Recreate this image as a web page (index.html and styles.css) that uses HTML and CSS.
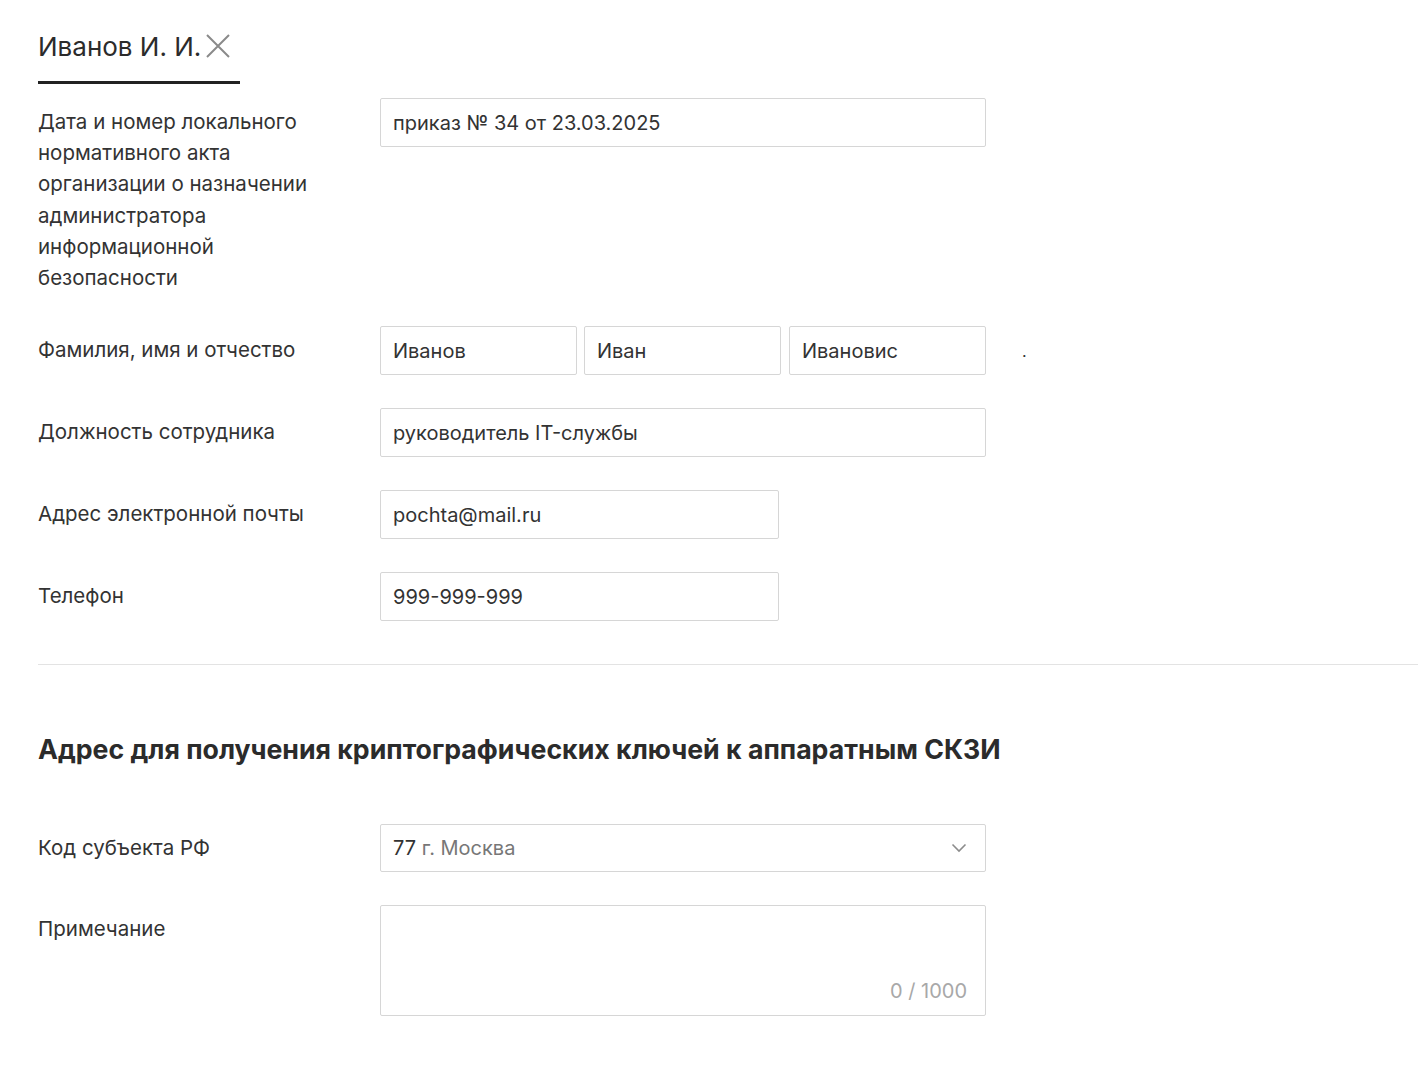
FILE: index.html
```html
<!DOCTYPE html>
<html lang="ru">
<head>
<meta charset="utf-8">
<link rel="stylesheet" href="styles.css">
</head>
<body>
<div class="page">
  <div class="tabs">
    <div class="tab">
      <span class="tab-title">Иванов И. И.</span>
      <svg class="tab-close" width="24" height="24" viewBox="0 0 24 24"><path d="M1 1L23 23M23 1L1 23" stroke="#8a8a8a" stroke-width="2" fill="none"/></svg>
    </div>
  </div>

  <div class="form">
    <div class="label">Дата и номер локального нормативного акта организации о назначении администратора информационной безопасности</div>
    <div class="field"><div class="input wide">приказ № 34 от 23.03.2025</div></div>

    <div class="label">Фамилия, имя и отчество</div>
    <div class="field fio">
      <div class="input third">Иванов</div>
      <div class="input third">Иван</div>
      <div class="input third">Ивановис</div>
      <span class="dot">.</span>
    </div>

    <div class="label">Должность сотрудника</div>
    <div class="field"><div class="input wide">руководитель IT-службы</div></div>

    <div class="label">Адрес электронной почты</div>
    <div class="field"><div class="input mid">pochta@mail.ru</div></div>

    <div class="label">Телефон</div>
    <div class="field"><div class="input mid">999-999-999</div></div>
  </div>

  <div class="divider"></div>

  <h2 class="section-title">Адрес для получения криптографических ключей к аппаратным СКЗИ</h2>

  <div class="form form2">
    <div class="label">Код субъекта РФ</div>
    <div class="field">
      <div class="input wide select">
        <span><span class="code">77</span> <span class="muted">г. Москва</span></span>
        <svg class="chevron" width="16" height="10" viewBox="0 0 16 10"><path d="M1.5 1.5L8 8L14.5 1.5" stroke="#8c8c8c" stroke-width="1.6" fill="none"/></svg>
      </div>
    </div>

    <div class="label">Примечание</div>
    <div class="field">
      <div class="input wide textarea"><span class="counter">0 / 1000</span></div>
    </div>
  </div>
</div>
</body>
</html>
```
FILE: styles.css
```css
* { box-sizing: border-box; }
html, body { margin: 0; padding: 0; background: #fff; }
body {
  font-family: Inter, Roboto, "Noto Sans", sans-serif;
  color: #333;
  font-size: 20px;
}
.page { padding: 32px 0 40px 38px; }

.tabs { display: flex; }
.tab {
  display: flex;
  align-items: center;
  height: 52px;
  padding-bottom: 20px;
  width: 202px;
  border-bottom: 3px solid #222;
  gap: 5px;
}
.tab-title { font-size: 26px; line-height: 30px; color: #2b2b2b; white-space: nowrap; }
.tab-close { margin-top: -2px; flex-shrink: 0; }

.form {
  display: grid;
  grid-template-columns: 342px auto;
  justify-content: start;
  row-gap: 33px;
  margin-top: 14px;
}
.label {
  padding-top: 8px;
  line-height: 31.2px;
  font-size: 20.5px;
  color: #333;
  max-width: 300px;
}
.field { display: flex; align-items: flex-start; }
.fio { gap: 7px; align-items: center; }
.input {
  flex-shrink: 0;
  height: 49px;
  border: 1px solid #d6d6d6;
  border-radius: 2px;
  padding: 0 12px;
  display: flex;
  align-items: center;
  font-size: 20px;
  color: #333;
  background: #fff;
  white-space: nowrap;
}
.wide { width: 606px; }
.mid { width: 399px; }
.third { width: 197px; }
.fio .third:nth-child(2) { width: 197px; margin-right: 1px; }
.dot { margin-left: 29px; font-size: 16px; color: #333; }

.divider {
  height: 1px;
  background: #e3e3e3;
  margin-top: 43px;
}
.section-title {
  margin: 68px 0 0 0;
  font-size: 26.7px;
  line-height: 32px;
  font-weight: 700;
  color: #2b2b2b;
}
.form2 { margin-top: 59px; }
.select { justify-content: space-between; height: 48px; padding-right: 18px; }
.code { color: #333; }
.muted { color: #777; }
.textarea {
  height: 111px;
  align-items: flex-end;
  justify-content: flex-end;
  padding: 0 18px 12px 12px;
}
.counter { color: #a8a8a8; font-size: 20px; }
```
